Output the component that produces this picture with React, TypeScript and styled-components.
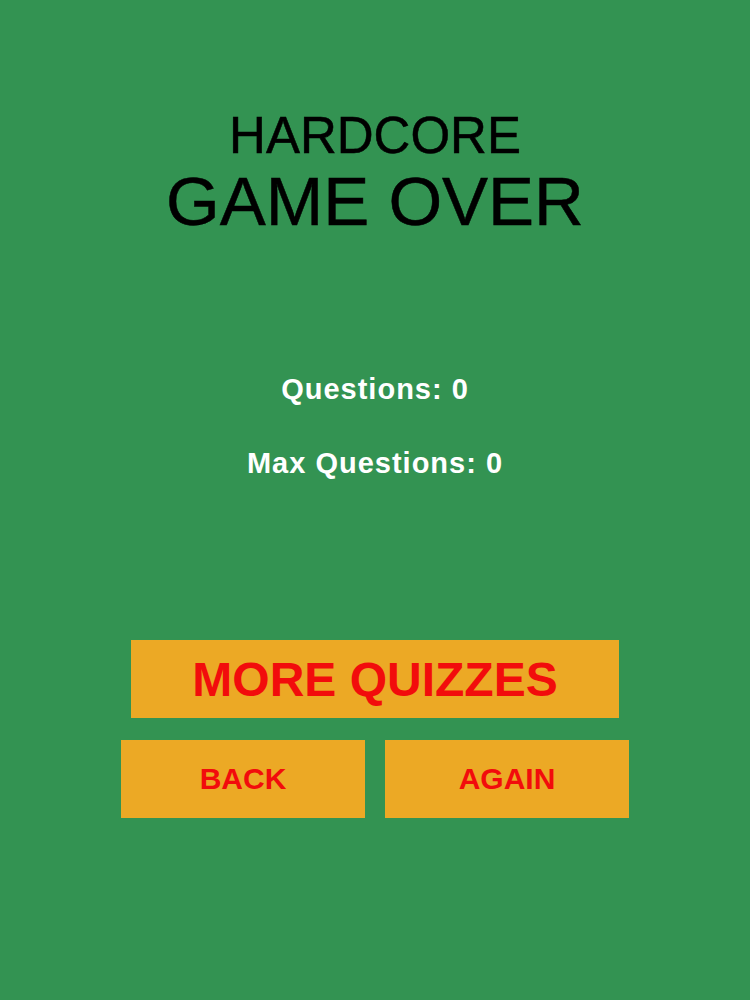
import styled, { createGlobalStyle } from 'styled-components';

const GlobalStyle = createGlobalStyle`
  html, body {
    margin: 0;
    padding: 0;
    background: #339352;
  }
  body {
    font-family: "Liberation Sans", Arial, sans-serif;
  }
`;

const App = () => {
  return (
    <Styled.Screen>
      <GlobalStyle />
      <Styled.Header>
        <Styled.Mode>HARDCORE</Styled.Mode>
        <Styled.Title>GAME OVER</Styled.Title>
      </Styled.Header>
      <Styled.Stats>
        <Styled.Stat>Questions: 0</Styled.Stat>
        <Styled.Stat>Max Questions: 0</Styled.Stat>
      </Styled.Stats>
      <Styled.Actions>
        <Styled.Button $wide>MORE QUIZZES</Styled.Button>
        <Styled.Row>
          <Styled.Button>BACK</Styled.Button>
          <Styled.Button>AGAIN</Styled.Button>
        </Styled.Row>
      </Styled.Actions>
    </Styled.Screen>
  );
};

const Styled = {
  Screen: styled.div`
    width: 750px;
    height: 1000px;
    background: #339352;
    display: flex;
    flex-direction: column;
    align-items: center;
    padding-top: 110px;
    box-sizing: border-box;
  `,
  Header: styled.div`
    display: flex;
    flex-direction: column;
    align-items: center;
    gap: 6px;
    color: #000;
    -webkit-text-stroke: 0.5px #000;
  `,
  Mode: styled.div`
    font-size: 51px;
    line-height: 51px;
  `,
  Title: styled.div`
    font-size: 69px;
    line-height: 69px;
  `,
  Stats: styled.div`
    margin-top: 139px;
    display: flex;
    flex-direction: column;
    align-items: center;
    gap: 45px;
  `,
  Stat: styled.div`
    color: #fff;
    font-weight: bold;
    font-size: 29px;
    line-height: 29px;
    letter-spacing: 1px;
  `,
  Actions: styled.div`
    margin-top: 162px;
    display: flex;
    flex-direction: column;
    align-items: center;
    gap: 22px;
  `,
  Row: styled.div`
    display: flex;
    gap: 20px;
  `,
  Button: styled.button<{ $wide?: boolean }>`
    width: ${(p) => (p.$wide ? '488px' : '244px')};
    height: 78px;
    border: none;
    border-radius: 0;
    padding: 0;
    background: #eca925;
    color: #f20c0c;
    font-family: "Liberation Sans", Arial, sans-serif;
    font-weight: bold;
    font-size: ${(p) => (p.$wide ? '48px' : '30px')};
    display: flex;
    align-items: center;
    justify-content: center;
    cursor: pointer;
  `,
};

export default App;
